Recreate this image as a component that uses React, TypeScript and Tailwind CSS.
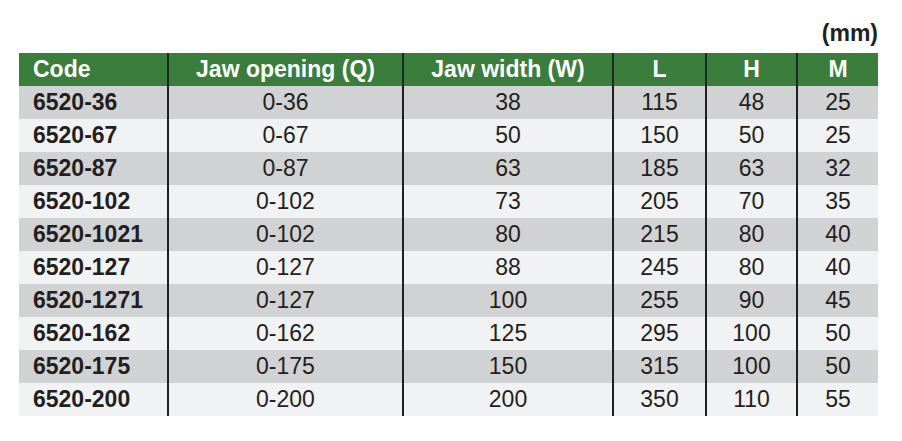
const rows = [
  ['6520-36', '0-36', '38', '115', '48', '25'],
  ['6520-67', '0-67', '50', '150', '50', '25'],
  ['6520-87', '0-87', '63', '185', '63', '32'],
  ['6520-102', '0-102', '73', '205', '70', '35'],
  ['6520-1021', '0-102', '80', '215', '80', '40'],
  ['6520-127', '0-127', '88', '245', '80', '40'],
  ['6520-1271', '0-127', '100', '255', '90', '45'],
  ['6520-162', '0-162', '125', '295', '100', '50'],
  ['6520-175', '0-175', '150', '315', '100', '50'],
  ['6520-200', '0-200', '200', '350', '110', '55'],
];

const headers = ['Code', 'Jaw opening (Q)', 'Jaw width (W)', 'L', 'H', 'M'];

const gridCols = 'grid grid-cols-[148px_235px_210px_93px_91px_82px] h-[33px]';

export default function App() {
  return (
    <div
      className="w-[902px] h-[441px] bg-white pl-[19px] text-[#231f20]"
      style={{ fontFamily: '"Liberation Sans", Arial, sans-serif' }}
    >
      <div className="w-[859px]">
        {/* Units */}
        <div className="h-[53px] pt-[22px] text-right text-[23px] font-bold leading-[23px]">(mm)</div>

        {/* Header */}
        <div className={`${gridCols} bg-[#3a7d3c] text-[23px] font-bold leading-none text-white`}>
          {headers.map((h, i) => (
            <div
              key={h}
              className={
                i === 0
                  ? 'flex items-center pl-[14px]'
                  : 'flex items-center justify-center border-l-2 border-[#1e2a1e]'
              }
            >
              {h}
            </div>
          ))}
        </div>

        {/* Body */}
        {rows.map((r, ri) => (
          <div
            key={r[0]}
            className={`${gridCols} text-[23px] leading-none ${ri % 2 === 0 ? 'bg-[#d1d2d4]' : 'bg-[#f1f2f3]'}`}
          >
            {r.map((c, ci) => (
              <div
                key={ci}
                className={
                  ci === 0
                    ? 'flex items-center pl-[14px] font-bold'
                    : 'flex items-center justify-center border-l-2 border-[#231f20]'
                }
              >
                {c}
              </div>
            ))}
          </div>
        ))}
      </div>
    </div>
  );
}
